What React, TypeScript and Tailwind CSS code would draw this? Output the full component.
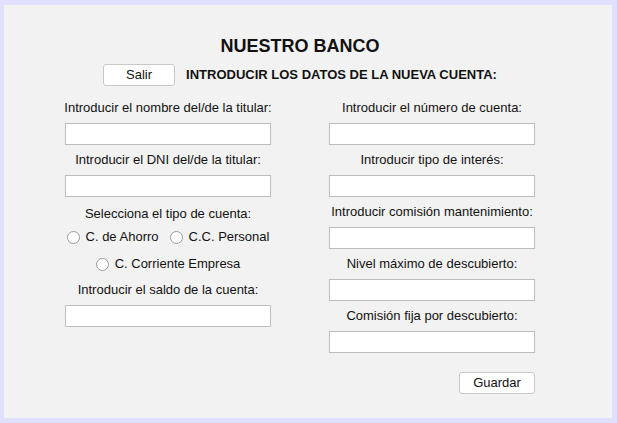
const Field = ({ label, className = '' }: { label: string; className?: string }) => (
  <div className={`flex flex-col items-center ${className}`}>
    <div className="h-4 leading-4 text-[13px] text-center whitespace-nowrap">{label}</div>
    <div className="mt-[7px] h-[22px] w-[206px] border border-[#bdbdbd] bg-white"></div>
  </div>
);

const Radio = ({ label }: { label: string }) => (
  <label className="flex items-center gap-[6px]">
    <span className="h-[13px] w-[13px] rounded-full border border-[#9a9a9a] bg-white"></span>
    <span>{label}</span>
  </label>
);

export default function App() {
  return (
    <div
      className="h-[423px] w-[617px] bg-[#e0e0fe] pl-[4px] pr-[5px] pt-[5px] pb-[5px] text-[#111]"
      style={{ fontFamily: '"Liberation Sans", Arial, sans-serif' }}
    >
      <div className="h-full bg-[#f2f2f2] pt-[31px]">
        <div className="w-[470px] ml-[61px]">
          <h1 className="text-center text-[18px] leading-5 font-bold">NUESTRO BANCO</h1>

          <div className="mt-[8px] flex items-center justify-center gap-[11px]">
            <button className="h-[22px] w-[72px] rounded-[3px] border border-[#c8c8c8] bg-white text-[13px]">
              Salir
            </button>
            <span className="text-[13px] font-bold">INTRODUCIR LOS DATOS DE LA NUEVA CUENTA:</span>
          </div>

          <div className="mt-[14px] flex justify-between">
            {/* left column */}
            <div className="flex w-[206px] flex-col gap-[7px]">
              <Field label="Introducir el nombre del/de la titular:" />
              <Field label="Introducir el DNI del/de la titular:" />
              <div className="mt-[2px] flex flex-col items-center text-[13px]">
                <div className="h-4 leading-4">Selecciona el tipo de cuenta:</div>
                <div className="mt-[7px] flex h-4 items-center gap-[11px]">
                  <Radio label="C. de Ahorro" />
                  <Radio label="C.C. Personal" />
                </div>
                <div className="mt-[11px] flex h-4 items-center">
                  <Radio label="C. Corriente Empresa" />
                </div>
              </div>
              <Field label="Introducir el saldo de la cuenta:" className="mt-[3px]" />
            </div>

            {/* right column */}
            <div className="flex w-[206px] flex-col gap-[7px]">
              <Field label="Introducir el número de cuenta:" />
              <Field label="Introducir tipo de interés:" />
              <Field label="Introducir comisión mantenimiento:" />
              <Field label="Nivel máximo de descubierto:" />
              <Field label="Comisión fija por descubierto:" />
              <div className="mt-[12px] flex justify-end">
                <button className="h-[22px] w-[76px] rounded-[3px] border border-[#c8c8c8] bg-white text-[13px]">
                  Guardar
                </button>
              </div>
            </div>
          </div>
        </div>
      </div>
    </div>
  );
}
